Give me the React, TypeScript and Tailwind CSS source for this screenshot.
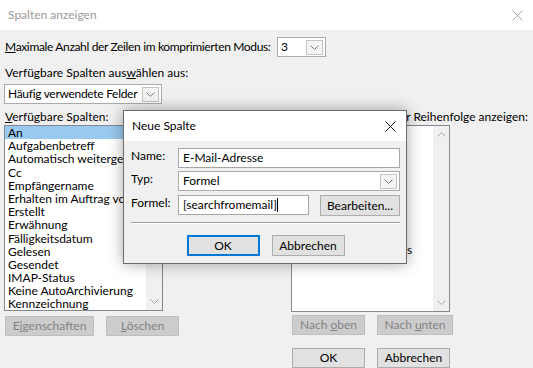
import React from 'react'

// ── Data ────────────────────────────────────────────────────────────────────

const AVAILABLE = [
  'An',
  'Aufgabenbetreff',
  'Automatisch weitergeleitet',
  'Cc',
  'Empfängername',
  'Erhalten im Auftrag von',
  'Erstellt',
  'Erwähnung',
  'Fälligkeitsdatum',
  'Gelesen',
  'Gesendet',
  'IMAP-Status',
  'Keine AutoArchivierung',
  'Kennzeichnung',
]

const SHOWN = [
  'Wichtigkeit',
  'Erinnerung',
  'Symbol',
  'Anlage',
  'Von',
  'Betreff',
  'Erhalten',
  'Größe',
  'Kategorien',
  'Kennzeichnungsstatus',
]

// ── Small pieces ────────────────────────────────────────────────────────────

function Chevron({ up, className }: { up?: boolean; className?: string }) {
  return (
    <svg width="9" height="5" viewBox="0 0 9 5" className={className} fill="none">
      <path
        d={up ? 'M0.5 4.5 L4.5 0.5 L8.5 4.5' : 'M0.5 0.5 L4.5 4.5 L8.5 0.5'}
        stroke="currentColor"
        strokeWidth="1"
      />
    </svg>
  )
}

function CloseX({ size, color }: { size: number; color: string }) {
  return (
    <svg width={size} height={size} viewBox={`0 0 ${size} ${size}`} fill="none">
      <path d={`M0.5 0.5 L${size - 0.5} ${size - 0.5} M${size - 0.5} 0.5 L0.5 ${size - 0.5}`} stroke={color} strokeWidth="1" />
    </svg>
  )
}

function DropButton() {
  return (
    <div className="mr-[2px] flex h-[15px] w-[17px] shrink-0 items-center justify-center border border-[#c4c4c4] bg-[#f4f4f4] text-[#7a7a7a]">
      <Chevron />
    </div>
  )
}

function Combo({ value, className, textClass = '' }: { value: string; className: string; textClass?: string }) {
  return (
    <div className={`flex h-[20px] items-center border border-[#ababab] bg-white ${className}`}>
      <span className={`flex-1 truncate pl-[3px] leading-[18px] ${textClass}`}>{value}</span>
      <DropButton />
    </div>
  )
}

function Btn({
  children,
  disabled,
  primary,
  className,
}: {
  children: React.ReactNode
  disabled?: boolean
  primary?: boolean
  className: string
}) {
  let look = 'border border-[#adadad] bg-[#e1e1e1] text-black'
  if (disabled) look = 'border border-[#bfbfbf] bg-[#cccccc] text-[#838383]'
  if (primary) look = 'border-2 border-[#0078d7] bg-[#e1e1e1] text-black'
  return (
    <div className={`flex shrink-0 items-center justify-center ${look} ${className}`}>
      <span className="whitespace-pre">{children}</span>
    </div>
  )
}

function ScrollStrip() {
  return (
    <div className="flex w-[16px] shrink-0 flex-col items-center justify-between bg-[#f0f0f0] py-[6px] text-[#a6a6a6]">
      <Chevron up />
      <Chevron />
    </div>
  )
}

// ── Page ────────────────────────────────────────────────────────────────────

export default function App() {
  return (
    <div className="relative h-[368px] w-[533px] overflow-hidden bg-[#f0f0f0] font-['Lato',sans-serif] text-[12px] text-black">
      {/* Title bar */}
      <div className="flex h-[30px] items-center justify-between bg-white pl-[8px] pr-[10px]">
        <span className="text-[#999999]">Spalten anzeigen</span>
        <CloseX size={11} color="#a8a8a8" />
      </div>

      {/* Body */}
      <div className="px-[4px]">
        <div className="mt-[7px] flex h-[20px] items-center">
          <span className="w-[272px] shrink-0 whitespace-nowrap pl-[1px] tracking-[-0.35px]">
            <u>M</u>aximale Anzahl der Zeilen im komprimierten Modus:
          </span>
          <Combo value="3" className="ml-[1px] w-[49px]" />
        </div>

        <div className="mt-[8px] h-[15px] pl-[1px] leading-[15px]">
          Verfügbare Spalten aus<u>w</u>ählen aus:
        </div>

        <Combo value="Häufig verwendete Felder" className="mt-[4px] w-[158px]" textClass="tracking-[-0.3px]" />

        <div className="mt-[5px] flex">
          {/* Left column */}
          <div className="w-[287px] shrink-0">
            <div className="h-[15px] pl-[1px] leading-[15px]">
              <u>V</u>erfügbare Spalten:
            </div>
            <div className="mt-[1px] flex h-[186px] w-[159px] border border-[#828790] bg-white">
              <div className="min-w-0 flex-1 overflow-hidden">
                {AVAILABLE.map((name, i) => (
                  <div
                    key={name}
                    className={`h-[13.2px] whitespace-nowrap pl-[3px] leading-[13px] ${i === 0 ? 'bg-[#99c9ef]' : ''}`}
                  >
                    {name}
                  </div>
                ))}
              </div>
              <ScrollStrip />
            </div>
            <div className="mt-[5px] flex gap-[12px] pl-[1px]">
              <Btn disabled className="h-[20px] w-[89px]">
                E<u>i</u>genschaften
              </Btn>
              <Btn disabled className="h-[20px] w-[73px]">
                <u>L</u>öschen
              </Btn>
            </div>
          </div>

          {/* Right column */}
          <div className="min-w-0 flex-1">
            <div className="h-[15px] whitespace-nowrap leading-[15px]">
              Diese Spalten in dieser Reihenfolge anzeigen:
            </div>
            <div className="mt-[1px] flex h-[187px] w-[159px] border border-[#828790] bg-white">
              <div className="min-w-0 flex-1 overflow-hidden">
                {SHOWN.map((name) => (
                  <div key={name} className="h-[13px] whitespace-nowrap pl-[3px] leading-[13px]">
                    {name}
                  </div>
                ))}
              </div>
              <ScrollStrip />
            </div>
            <div className="mt-[3px] flex gap-[12px] pl-[1px]">
              <Btn disabled className="h-[20px] w-[73px]">
                Nach <u>o</u>ben
              </Btn>
              <Btn disabled className="h-[20px] w-[76px]">
                Nach <u>u</u>nten
              </Btn>
            </div>
            <div className="mt-[13px] flex gap-[12px] pl-[1px]">
              <Btn className="h-[20px] w-[73px]">OK</Btn>
              <Btn className="h-[20px] w-[73px]">Abbrechen</Btn>
            </div>
          </div>
        </div>
      </div>

      {/* Neue Spalte dialog (overlay) */}
      <div className="absolute left-[123px] top-[110px] flex h-[154px] w-[284px] flex-col border border-[#6b6b6b] bg-[#f0f0f0] shadow-[0_0_14px_rgba(0,0,0,0.35)]">
        <div className="flex h-[30px] shrink-0 items-center justify-between bg-white pl-[8px] pr-[10px]">
          <span>Neue Spalte</span>
          <CloseX size={11} color="#111111" />
        </div>

        <div className="px-[7px] pr-[6px] pt-[7px]">
          <div className="flex items-start">
            <span className="w-[47px] shrink-0 leading-[16px]">Name:</span>
            <div className="flex h-[20px] flex-1 items-center border border-[#a6a6a6] bg-white pl-[4px]">
              E-Mail-Adresse
            </div>
          </div>

          <div className="mt-[3px] flex items-start">
            <span className="w-[47px] shrink-0 leading-[16px]">Typ:</span>
            <Combo value="Formel" className="flex-1 pl-[1px]" />
          </div>

          <div className="mt-[4px] flex items-start">
            <span className="w-[47px] shrink-0 leading-[16px]">Formel:</span>
            <div className="flex h-[20px] w-[131px] shrink-0 items-center border border-[#a6a6a6] bg-white pl-[4px]">
              <span>[searchfromemail]</span>
              <span className="h-[14px] w-px bg-black" />
            </div>
            <Btn className="ml-[11px] h-[21px] flex-1">Bearbeiten...</Btn>
          </div>

          <div className="mt-[6px] h-px bg-[#a0a0a0]" />
          <div className="h-px bg-white" />

          <div className="mt-[11px] flex justify-center gap-[12px]">
            <Btn primary className="h-[21px] w-[73px]">
              OK
            </Btn>
            <Btn className="h-[21px] w-[73px]">Abbrechen</Btn>
          </div>
        </div>
      </div>
    </div>
  )
}
